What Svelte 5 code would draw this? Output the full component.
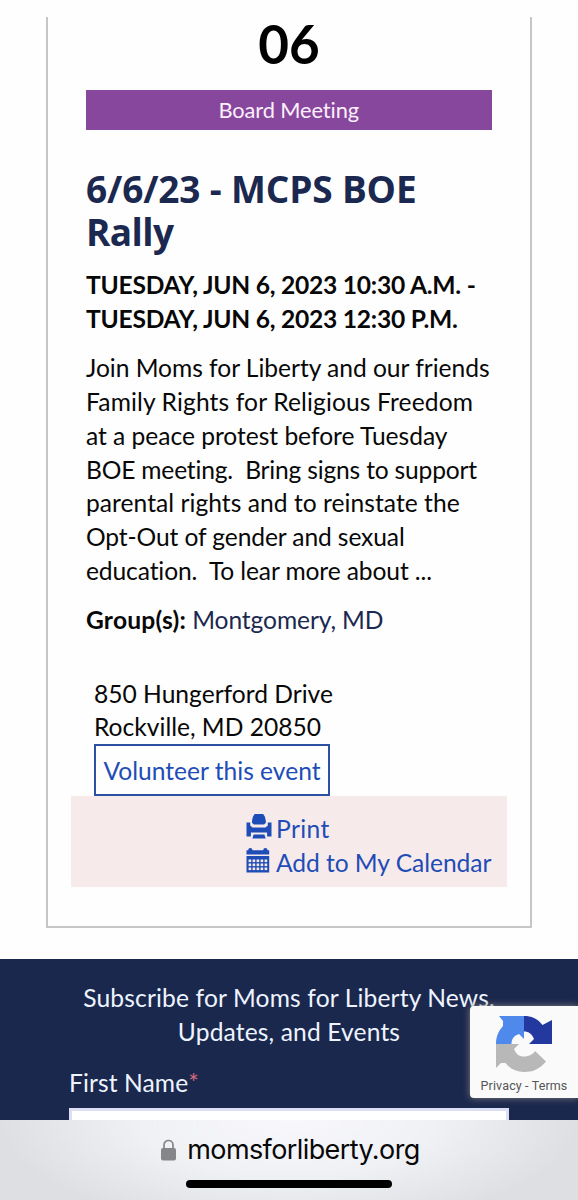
<script>
	const description = [
		{ text: 'Join Moms for Liberty and our friends', spacing: -0.03 },
		{ text: 'Family Rights for Religious Freedom', spacing: 0.13 },
		{ text: 'at a peace protest before Tuesday', spacing: -0.03 },
		{ text: 'BOE meeting.  Bring signs to support', spacing: -0.19 },
		{ text: 'parental rights and to reinstate the', spacing: 0.04 },
		{ text: 'Opt-Out of gender and sexual', spacing: -0.11 },
		{ text: 'education.  To lear more about ...', spacing: -0.12 }
	];

	const holes = [0, 1, 2, 3, 4].flatMap((col) => [0, 1, 2].map((row) => ({ col, row })));
</script>

<div class="screen">
	<main>
		<article class="event">
			<div class="day">06</div>
			<div class="category">Board Meeting</div>
			<h2><span>6/6/23 - MCPS BOE</span><br />Rally</h2>
			<p class="date">TUESDAY, JUN 6, 2023 10:30 A.M. -<br />TUESDAY, JUN 6, 2023 12:30 P.M.</p>
			<p class="description">
				{#each description as { text, spacing }}
					<span style={`letter-spacing: ${spacing}px`}>{text}</span>
				{/each}
			</p>
			<p class="group"><b>Group(s):</b> <a href="#group">Montgomery, MD</a></p>
			<address>850 Hungerford Drive<br />Rockville, MD 20850</address>
			<a class="volunteer" href="#volunteer">Volunteer this event</a>
			<div class="actions">
				<a href="#print">
					<svg width="26" height="26" viewBox="0 0 26 26" fill="currentColor">
						<path d="M8.6 0h8.6l1.4 2.2c.9 2.4 1.3 4.3 1.3 6.6l-1.8 1.7H7.8L6 8.8C6 6.2 6.4 4.2 7.2 2.2z" />
						<path d="M.5 8.6h3.7v2.9l2.3 1.9h13l2.3-1.9V8.600h3.700v13.900h-4.400v-4.100H4.900v4.100H.5z" />
						<path d="M7.6 20.6h10.800l1.300 3.900H6.400z" />
					</svg>
					<span class="print">Print</span>
				</a>
				<a href="#calendar">
					<svg width="26" height="26" viewBox="0 0 26 26" fill="currentColor">
						<path d="M.5 2.3h1.700C2.300.7 3.100 0 4.300 0s2 .7 2.200 2.300h10.700C17.400.7 18.200 0 19.400 0s2 .7 2.100 2.300h1.700V6.400H.5z" />
						<path d="M.5 8h22.700v16.500H.5z" />
						{#each holes as { col, row }}
							<rect class="hole" x={2.6 + col * 4} y={11.5 + row * 4} width="2.6" height="2.6" />
						{/each}
					</svg>
					<span>Add to My Calendar</span>
				</a>
			</div>
		</article>
	</main>

	<footer>
		<p class="subscribe">Subscribe for Moms for Liberty News,<br />Updates, and Events</p>
		<label for="first-name">First Name<span>*</span></label>
		<input id="first-name" type="text" />
		<div class="recaptcha">
			<svg width="58" height="58" viewBox="0 0 58 58">
				<path fill="#5089ec" d="M4 1h25v23l-5-5c-5 1.500-7.500 5-7.500 10H1c0-7.500 2.500-13 7-18V6z" />
				<path fill="#2339a0" d="M29 1c8 0 14 3 18.500 9L57 5v24H34l5-5c-2-5-5-7.500-10-7.500z" />
				<path fill="#b8b8b8" d="M1 29h23l-5 5c2 5 5 7.500 10 7.500 4 0 8.500-1.500 11-5.500l11 10.500C45 54 38 57 29 57 21 57 15 54 10.500 48L6 48l-5 5z" />
			</svg>
			<span>Privacy - Terms</span>
		</div>
	</footer>

	<nav>
		<div class="url">
			<svg width="15" height="22" viewBox="0 0 15 22">
				<path d="M3 10V6c0-6 9-6 9 0v4" fill="none" stroke="#85868a" stroke-width="1.7" />
				<rect y="9" width="15" height="12.5" rx="2" fill="#85868a" />
			</svg>
			<span>momsforliberty.org</span>
		</div>
		<div class="home"></div>
	</nav>
</div>

<style>
	:global(body) {
		margin: 0;
	}

	.screen {
		display: flex;
		flex-direction: column;
		width: 578px;
		height: 1200px;
		overflow: hidden;
		box-sizing: border-box;
		background: #fefefe;
		color: #080808;
		font: 24.6px/33.9px Lato, sans-serif;
		font-variant-ligatures: none;
	}

	main {
		height: 959px;
		flex: none;
		padding: 17px 46px 0;
		box-sizing: border-box;
	}

	.event {
		height: 911px;
		box-sizing: border-box;
		border: 2px solid #c6c6c6;
		border-top: 0;
		padding: 0 38px;
	}

	.day {
		height: 73px;
		font-size: 53px;
		font-weight: 700;
		line-height: 54px;
		text-align: center;
		color: #000;
	}

	.category {
		height: 40px;
		margin-right: 0.5px;
		background: #87479c;
		color: #fdeffc;
		font-size: 21.8px;
		letter-spacing: -0.1px;
		line-height: 40px;
		text-align: center;
	}

	h2 {
		margin: 37px 0 15px;
		color: #1b2850;
		font: 700 37px/43px 'Open Sans', sans-serif;
		letter-spacing: -0.6px;
		white-space: nowrap;
	}

	h2 span {
		letter-spacing: -0.15px;
	}

	p {
		margin: 0;
		white-space: nowrap;
	}

	.date {
		font-weight: 700;
		letter-spacing: -0.24px;
	}

	.description {
		margin-top: 15px;
	}

	.description span {
		display: block;
		white-space: pre;
	}

	.group {
		margin-top: 15px;
	}

	.group b {
		letter-spacing: 0.2px;
	}

	.group a {
		color: #1b2850;
		letter-spacing: -0.1px;
		text-decoration: none;
	}

	address {
		margin: 39.5px 0 0 8px;
		font-style: normal;
	}

	.volunteer {
		display: block;
		width: 236px;
		height: 52px;
		box-sizing: border-box;
		margin-left: 8px;
		border: 2px solid #2d51a2;
		color: #1e4db7;
		line-height: 49px;
		text-align: center;
		text-decoration: none;
		white-space: nowrap;
	}

	.actions {
		height: 91px;
		box-sizing: border-box;
		margin: 0 -15px;
		padding: 16px 0 0 175px;
		background: #f7eaea;
	}

	.actions a {
		display: flex;
		gap: 4px;
		height: 34px;
		color: #1e4db7;
		text-decoration: none;
		letter-spacing: -0.05px;
		white-space: nowrap;
	}

	.actions .print {
		letter-spacing: 0.4px;
	}

	.actions svg {
		flex: none;
		margin-top: 2px;
	}

	.hole {
		fill: #f7eaea;
	}

	footer {
		position: relative;
		flex: none;
		height: 161px;
		box-sizing: border-box;
		padding: 22px 69px 0;
		background: #1b284d;
		color: #eef4ff;
		overflow: hidden;
	}

	.subscribe {
		text-align: center;
		letter-spacing: 0.14px;
	}

	label {
		display: block;
		height: 41.5px;
		margin-top: 17.5px;
		letter-spacing: 0.1px;
	}

	label span {
		color: #d0697b;
		font-size: 25px;
		line-height: 1;
	}

	input {
		display: block;
		width: 440px;
		height: 40px;
		box-sizing: border-box;
		padding: 0;
		border: 3px solid #dcdff4;
		border-radius: 0;
		background: #fff;
	}

	.recaptcha {
		position: absolute;
		top: 47px;
		left: 470px;
		display: flex;
		flex-direction: column;
		align-items: center;
		width: 108px;
		height: 92px;
		box-sizing: border-box;
		padding-top: 9px;
		border-radius: 4px 0 0 4px;
		background: #fafafa;
		box-shadow: 0 0 7px #808080;
		color: #555;
		font: 12.5px/26px Roboto, sans-serif;
		letter-spacing: 0.13px;
		white-space: nowrap;
	}

	.recaptcha svg {
		flex: none;
	}

	nav {
		flex: 1;
		display: flex;
		flex-direction: column;
		align-items: center;
		background: radial-gradient(ellipse 290px 110px at 50% 0, #f8f8fc, #f0f1f5 50%, #dedfe3);
	}

	.url {
		display: flex;
		align-items: center;
		gap: 11px;
		height: 60px;
		padding-left: 3px;
		color: #080808;
		font: 27px/60px Inter, sans-serif;
		letter-spacing: -0.6px;
	}

	.home {
		width: 206px;
		height: 8px;
		border-radius: 4px;
		background: #000;
	}
</style>
